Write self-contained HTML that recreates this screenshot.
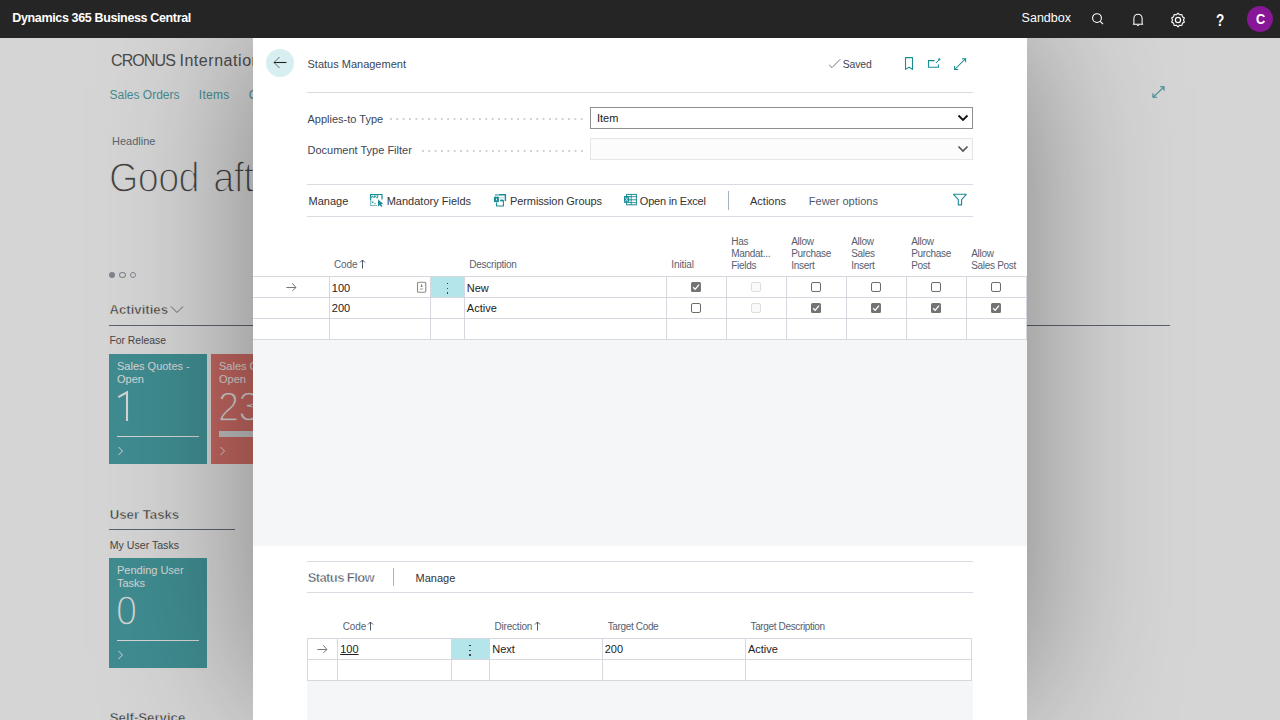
<!DOCTYPE html>
<html><head><meta charset="utf-8"><style>
html,body{margin:0;padding:0;width:1280px;height:720px;overflow:hidden;background:#fff;}
body{position:relative;font-family:"Liberation Sans",sans-serif;}
.t{position:absolute;white-space:nowrap;}
.r{position:absolute;}
svg.r{overflow:visible;}
.dots{background-image:linear-gradient(to right,#cdd0d7 0,#cdd0d7 1.9px,transparent 1.9px);background-size:6.37px 2px;}
</style></head><body>
<div class="r" style="left:0px;top:38px;width:1280px;height:682px;background:#ffffff;"></div>
<div class="t" style="left:111px;top:52.76px;font-size:16px;line-height:16px;color:#5a5a5a;font-weight:normal;letter-spacing:0px;"><span style="letter-spacing:-0.9px">CRONUS</span> <span style="letter-spacing:0.55px">International Ltd.</span></div>
<div class="t" style="left:109.5px;top:88.64px;font-size:12px;line-height:12px;color:#55a7ac;font-weight:normal;letter-spacing:0px;">Sales Orders</div>
<div class="t" style="left:198.8px;top:88.64px;font-size:12px;line-height:12px;color:#55a7ac;font-weight:normal;letter-spacing:0.3px;">Items</div>
<div class="t" style="left:248.8px;top:88.64px;font-size:12px;line-height:12px;color:#55a7ac;font-weight:normal;letter-spacing:0px;">Customers</div>
<div class="t" style="left:112px;top:135.69px;font-size:11px;line-height:11px;color:#6e7886;font-weight:normal;letter-spacing:0px;">Headline</div>
<div class="t" style="left:108.8px;top:157.05px;font-size:42px;line-height:42px;color:#505050;font-weight:normal;letter-spacing:-0.7px;word-spacing:5px;-webkit-text-stroke:1.4px #fff;transform:scaleX(0.9);transform-origin:0 0;">Good afternoon, Annie</div>
<div class="r" style="left:109px;top:272px;width:6px;height:6px;border-radius:50%;background:#96a0aa"></div>
<div class="r" style="left:119px;top:272px;width:5px;height:4px;border-radius:50%;border:1px solid #96a0aa"></div>
<div class="r" style="left:130px;top:272px;width:4px;height:4px;border-radius:50%;border:1px solid #96a0aa"></div>
<div class="t" style="left:109.4px;top:302.63px;font-size:13.2px;line-height:13.2px;color:#474747;font-weight:bold;letter-spacing:0px;-webkit-text-stroke:0.5px #fff;">Activities</div>
<svg class="r" style="left:170px;top:305px" width="14" height="9" viewBox="0 0 14 9"><path d="M1 1.5 L7 7.5 L13 1.5" fill="none" stroke="#777" stroke-width="1"/></svg>
<div class="r" style="left:109px;top:325px;width:1061px;height:1px;background:#6c7682;"></div>
<div class="t" style="left:109.4px;top:335.90px;font-size:10.4px;line-height:10.4px;color:#555;font-weight:normal;letter-spacing:0px;">For Release</div>
<div class="r" style="left:109px;top:354px;width:98px;height:110px;background:#4ca8ad;"></div><div class="t" style="left:117px;top:361.29px;font-size:11px;line-height:11px;color:#fff;font-weight:normal;letter-spacing:0px;">Sales Quotes -</div><div class="t" style="left:117px;top:374.29px;font-size:11px;line-height:11px;color:#fff;font-weight:normal;letter-spacing:0px;">Open</div><svg class="r" style="left:109px;top:392px" width="20" height="40" viewBox="0 0 20 40"><path d="M9.3 5.2 L18 0.3 V29" fill="none" stroke="#fff" stroke-width="2.1" stroke-linejoin="miter"/></svg><div class="r" style="left:117px;top:436px;width:82px;height:1px;background:#fff;"></div><svg class="r" style="left:117px;top:446px" width="8" height="10" viewBox="0 0 8 10"><path d="M1.5 1 L5.5 5 L1.5 9" fill="none" stroke="#fff" stroke-width="1"/></svg>
<div class="r" style="left:211px;top:354px;width:98px;height:110px;background:#e97b73;"></div><div class="t" style="left:219px;top:361.29px;font-size:11px;line-height:11px;color:#fff;font-weight:normal;letter-spacing:0px;">Sales Orders -</div><div class="t" style="left:219px;top:374.29px;font-size:11px;line-height:11px;color:#fff;font-weight:normal;letter-spacing:0px;">Open</div><div class="t" style="left:217.8px;top:385.95px;font-size:42px;line-height:42px;color:#fff;font-weight:normal;letter-spacing:-0.6px;-webkit-text-stroke:1.4px #e97b73;transform:scaleX(0.9);transform-origin:0 0;">23</div><div class="r" style="left:219px;top:431px;width:82px;height:6px;background:#e6e6e6;"></div><svg class="r" style="left:219px;top:446px" width="8" height="10" viewBox="0 0 8 10"><path d="M1.5 1 L5.5 5 L1.5 9" fill="none" stroke="#fff" stroke-width="1"/></svg>
<div class="t" style="left:109.75px;top:507.83px;font-size:13.2px;line-height:13.2px;color:#474747;font-weight:bold;letter-spacing:0px;-webkit-text-stroke:0.5px #fff;">User Tasks</div>
<div class="r" style="left:109px;top:529px;width:126px;height:1px;background:#6c7682;"></div>
<div class="t" style="left:109.75px;top:539.83px;font-size:10.6px;line-height:10.6px;color:#555;font-weight:normal;letter-spacing:0px;">My User Tasks</div>
<div class="r" style="left:109px;top:558px;width:98px;height:110px;background:#4ca8ad;"></div><div class="t" style="left:117px;top:565.29px;font-size:11px;line-height:11px;color:#fff;font-weight:normal;letter-spacing:0px;">Pending User</div><div class="t" style="left:117px;top:578.29px;font-size:11px;line-height:11px;color:#fff;font-weight:normal;letter-spacing:0px;">Tasks</div><div class="t" style="left:115.8px;top:589.95px;font-size:42px;line-height:42px;color:#fff;font-weight:normal;letter-spacing:-0.6px;-webkit-text-stroke:1.4px #4ca8ad;transform:scaleX(0.9);transform-origin:0 0;">0</div><div class="r" style="left:117px;top:640px;width:82px;height:1px;background:#fff;"></div><svg class="r" style="left:117px;top:650px" width="8" height="10" viewBox="0 0 8 10"><path d="M1.5 1 L5.5 5 L1.5 9" fill="none" stroke="#fff" stroke-width="1"/></svg>
<div class="t" style="left:109.75px;top:711.33px;font-size:13.2px;line-height:13.2px;color:#474747;font-weight:bold;letter-spacing:0px;-webkit-text-stroke:0.5px #fff;">Self-Service</div>
<svg class="r" style="left:1151px;top:85px" width="15" height="15" viewBox="0 0 15 15"><path d="M2 12.3 L13 1.8 M9.1 1.8 H13 V5.8 M2 8.3 V12.3 H6" fill="none" stroke="#46a6ac" stroke-width="1.1"/></svg>
<div class="r" style="left:0px;top:38px;width:1280px;height:682px;background:rgba(0,0,0,0.165);"></div>
<div class="r" style="left:253px;top:38px;width:774px;height:662px;box-shadow:0 0 140px rgba(0,0,0,0.4);background:#fff"></div>
<div class="r" style="left:0px;top:0px;width:1280px;height:38px;background:#252525;"></div>
<div class="t" style="left:12.3px;top:12.02px;font-size:12.5px;line-height:12.5px;color:#fff;font-weight:bold;letter-spacing:-0.36px;">Dynamics 365 Business Central</div>
<div class="t" style="left:1021.6px;top:12.42px;font-size:12.5px;line-height:12.5px;color:#fff;font-weight:normal;letter-spacing:0px;">Sandbox</div>
<svg class="r" style="left:1090px;top:11px" width="16" height="16" viewBox="0 0 16 16"><circle cx="7" cy="7.1" r="4.4" fill="none" stroke="#fff" stroke-width="1.1"/><path d="M10.2 10.3 L13 13.1" stroke="#fff" stroke-width="1.2"/></svg>
<svg class="r" style="left:1130px;top:11.5px" width="16" height="16" viewBox="0 0 16 16"><path d="M3.3 12.3 L3.9 11.5 V6.3 A4.1 4.1 0 0 1 12.1 6.3 V11.5 L12.7 12.3 Z" fill="none" stroke="#fff" stroke-width="1.05" stroke-linejoin="round"/><path d="M6.9 12.9 A1.2 1.3 0 0 0 9.1 12.9" fill="none" stroke="#fff" stroke-width="1"/></svg>
<svg class="r" style="left:1170px;top:12px" width="16" height="16" viewBox="0 0 16 16"><path d="M8 1.2 L9.6 2.8 L11.9 2.5 L12.4 4.7 L14.4 6 L13.4 8 L14.4 10 L12.4 11.3 L11.9 13.5 L9.6 13.2 L8 14.8 L6.4 13.2 L4.1 13.5 L3.6 11.3 L1.6 10 L2.6 8 L1.6 6 L3.6 4.7 L4.1 2.5 L6.4 2.8 Z" fill="none" stroke="#fff" stroke-width="1.1" stroke-linejoin="round"/><circle cx="8" cy="8" r="2.6" fill="none" stroke="#fff" stroke-width="1.2"/></svg>
<div class="t" style="left:1215.8px;top:12.33px;font-size:16.5px;line-height:16.5px;color:#fff;font-weight:bold;letter-spacing:0px;transform:scaleX(0.82);transform-origin:0 0;">?</div>
<div class="r" style="left:1247px;top:6px;width:26px;height:26px;border-radius:50%;background:#881798"></div>
<div class="t" style="left:1255.6px;top:12.13px;font-size:14.5px;line-height:14.5px;color:#fff;font-weight:bold;letter-spacing:0px;transform:scaleX(0.88);transform-origin:0 0;">C</div>
<div class="r" style="left:253px;top:38px;width:774px;height:682px;background:#ffffff;"></div>
<div class="r" style="left:266px;top:48.5px;width:28px;height:28px;border-radius:50%;background:#d8eff2"></div>
<svg class="r" style="left:272px;top:55px" width="16" height="15" viewBox="0 0 16 15"><path d="M7.5 2 L2 7.5 L7.5 13" fill="none" stroke="#666" stroke-width="1"/><path d="M14.5 7.5 H2" fill="none" stroke="#222" stroke-width="1.1"/></svg>
<div class="t" style="left:307.5px;top:59.49px;font-size:11px;line-height:11px;color:#3c4656;font-weight:normal;letter-spacing:0px;">Status Management</div>
<svg class="r" style="left:828px;top:58px" width="14" height="12" viewBox="0 0 14 12"><path d="M1.2 6.8 L4 9.6 L12.2 1.3" fill="none" stroke="#5c6676" stroke-width="0.9"/></svg>
<div class="t" style="left:842.8px;top:60.00px;font-size:10.4px;line-height:10.4px;color:#3c4656;font-weight:normal;letter-spacing:-0.15px;">Saved</div>
<svg class="r" style="left:903px;top:56px" width="12" height="15" viewBox="0 0 12 15"><path d="M2.5 1.6 H9.5 V13.4 L6 11.2 L2.5 13.4 Z" fill="none" stroke="#1b8b94" stroke-width="1.1" stroke-linejoin="round"/></svg>
<svg class="r" style="left:926px;top:56px" width="16" height="14" viewBox="0 0 16 14"><path d="M8.6 4.6 H2.5 V11.2 H12.4 V8.6" fill="none" stroke="#1b8b94" stroke-width="1.1"/><path d="M10 7 L13.2 3.6" fill="none" stroke="#1b8b94" stroke-width="1"/><circle cx="13.3" cy="3.4" r="1.1" fill="#1b8b94"/></svg>
<svg class="r" style="left:953px;top:56.8px" width="15" height="14" viewBox="0 0 15 14"><path d="M1.6 12.5 L12.6 1.7 M9 1.7 H12.6 V5.3 M1.6 8.9 V12.5 H5.2" fill="none" stroke="#1b8b94" stroke-width="1.05"/></svg>
<div class="r" style="left:307px;top:92px;width:666px;height:1px;background:#d7dbe2;"></div>
<div class="t" style="left:307.5px;top:114.49px;font-size:11px;line-height:11px;color:#3c4656;font-weight:normal;letter-spacing:0px;">Applies-to Type</div>
<div class="r dots" style="left:390px;top:118.4px;width:195px;height:1.6px"></div>
<div class="r" style="left:590px;top:107px;width:383px;height:22px;background:#fff;border:1px solid #8e8e8e;box-sizing:border-box;"></div>
<div class="t" style="left:597px;top:112.69px;font-size:11px;line-height:11px;color:#212121;font-weight:normal;letter-spacing:0px;">Item</div>
<svg class="r" style="left:957px;top:114px" width="12" height="8" viewBox="0 0 12 8"><path d="M1.5 1.5 L6 6 L10.5 1.5" fill="none" stroke="#111" stroke-width="1.8"/></svg>
<div class="t" style="left:307.5px;top:144.99px;font-size:11px;line-height:11px;color:#3c4656;font-weight:normal;letter-spacing:0px;">Document Type Filter</div>
<div class="r dots" style="left:422.2px;top:150.2px;width:163px;height:1.6px"></div>
<div class="r" style="left:590px;top:138px;width:383px;height:22px;background:#fcfcfc;border:1px solid #e6e6e6;box-sizing:border-box;"></div>
<svg class="r" style="left:957px;top:145px" width="12" height="8" viewBox="0 0 12 8"><path d="M1.5 1.5 L6 6 L10.5 1.5" fill="none" stroke="#555" stroke-width="1.7"/></svg>
<div class="r" style="left:307px;top:184px;width:666px;height:1px;background:#d7dbe2;"></div>
<div class="r" style="left:307px;top:216px;width:666px;height:1px;background:#d7dbe2;"></div>
<div class="t" style="left:308.6px;top:195.69px;font-size:11px;line-height:11px;color:#333;font-weight:normal;letter-spacing:0px;">Manage</div>
<svg class="r" style="left:369px;top:193px" width="16" height="16" viewBox="0 0 16 16"><path d="M1.6 7 V1.5 H13 V6.5" fill="none" stroke="#1b8b94" stroke-width="1.2"/><path d="M2.3 4.8 L3.4 2.8 L4.4 4.8 M5.3 4.8 V2.8 H6.3 L6.6 3.8 L5.3 3.8 M7.5 2.8 H9.2 L7.5 4.8 H9.2" fill="none" stroke="#1b8b94" stroke-width="0.9"/><path d="M1.6 7 V12.5 H8" fill="none" stroke="#7dbdc2" stroke-width="1.1"/><path d="M3 8.5 L4.2 10 M4.2 8.5 L3 10 M5.4 10.6 H6.6" stroke="#1b8b94" stroke-width="0.9"/><path d="M9 6.4 V13.6 L10.7 12 L12.2 14 L13.4 13.3 L12 11.2 L14.2 10.8 Z" fill="#1b8b94"/></svg>
<div class="t" style="left:386.7px;top:195.69px;font-size:11px;line-height:11px;color:#333;font-weight:normal;letter-spacing:0px;">Mandatory Fields</div>
<svg class="r" style="left:493px;top:193px" width="15" height="15" viewBox="0 0 15 15"><path d="M6 1.8 H12.4 V8" fill="none" stroke="#1b8b94" stroke-width="1.4"/><path d="M2 1.8 H6" fill="none" stroke="#6fb6bb" stroke-width="1.2"/><path d="M6 4.8 H12" fill="none" stroke="#a9d6d9" stroke-width="1"/><rect x="1" y="3.8" width="4.9" height="5.3" fill="#1b8b94"/><path d="M2.3 3.8 V2.4 H4.6 V3.8" fill="none" stroke="#7dbdc2" stroke-width="0.9"/><rect x="3.1" y="5.6" width="0.9" height="1.8" fill="#fff"/><path d="M7.2 7.7 H10.4 V13 H3.6 V9.6" fill="none" stroke="#1b8b94" stroke-width="1.1"/><path d="M7.2 7.4 H10.4" stroke="#1b8b94" stroke-width="1.6"/></svg>
<div class="t" style="left:510px;top:195.69px;font-size:11px;line-height:11px;color:#333;font-weight:normal;letter-spacing:-0.1px;">Permission Groups</div>
<svg class="r" style="left:623px;top:193px" width="15" height="13" viewBox="0 0 15 13"><rect x="3.6" y="1.4" width="9.8" height="10.4" fill="none" stroke="#1b8b94" stroke-width="1"/><path d="M3.6 3.7 H13.4 M5.5 6.8 H13.4 M5.5 9.6 H13.4 M8.2 1.4 V11.8" stroke="#1b8b94" stroke-width="0.9"/><rect x="1" y="3" width="5.2" height="6.8" fill="#1b8b94"/><path d="M2.2 4.4 L5 8.5 M5 4.4 L2.2 8.5" stroke="#cfe8ea" stroke-width="0.9"/></svg>
<div class="t" style="left:639.8px;top:195.69px;font-size:11px;line-height:11px;color:#333;font-weight:normal;letter-spacing:-0.2px;">Open in Excel</div>
<div class="r" style="left:728px;top:191px;width:1px;height:19px;background:#aab2be;"></div>
<div class="t" style="left:750px;top:195.69px;font-size:11px;line-height:11px;color:#333;font-weight:normal;letter-spacing:0px;">Actions</div>
<div class="t" style="left:808.8px;top:195.69px;font-size:11px;line-height:11px;color:#4b5a6e;font-weight:normal;letter-spacing:0px;">Fewer options</div>
<svg class="r" style="left:952px;top:193px" width="16" height="14" viewBox="0 0 16 14"><path d="M1.5 1.3 H14.3 L9.6 6.6 V11.9 H6.3 V6.6 Z" fill="none" stroke="#1b8b94" stroke-width="1.1" stroke-linejoin="round"/></svg>
<div class="t" style="left:334px;top:259.94px;font-size:10px;line-height:10px;color:#566170;font-weight:normal;letter-spacing:-0.1px;">Code</div>
<svg class="r" style="left:358.5px;top:259px" width="7" height="10" viewBox="0 0 7 10"><path d="M3.5 9.5 V1 M1 3.5 L3.5 1 L6 3.5" fill="none" stroke="#4d5868" stroke-width="1"/></svg>
<div class="t" style="left:469.3px;top:259.54px;font-size:10px;line-height:10px;color:#566170;font-weight:normal;letter-spacing:-0.25px;">Description</div>
<div class="t" style="left:671.3px;top:259.54px;font-size:10px;line-height:10px;color:#566170;font-weight:normal;letter-spacing:-0.1px;">Initial</div>
<div class="t" style="left:731.3px;top:237.14px;font-size:10px;line-height:10px;color:#566170;font-weight:normal;letter-spacing:-0.3px;">Has</div>
<div class="t" style="left:731.3px;top:249.14px;font-size:10px;line-height:10px;color:#566170;font-weight:normal;letter-spacing:-0.3px;">Mandat...</div>
<div class="t" style="left:731.3px;top:261.14px;font-size:10px;line-height:10px;color:#566170;font-weight:normal;letter-spacing:-0.3px;">Fields</div>
<div class="t" style="left:791.2px;top:237.14px;font-size:10px;line-height:10px;color:#566170;font-weight:normal;letter-spacing:-0.3px;">Allow</div>
<div class="t" style="left:791.2px;top:249.14px;font-size:10px;line-height:10px;color:#566170;font-weight:normal;letter-spacing:-0.3px;">Purchase</div>
<div class="t" style="left:791.2px;top:261.14px;font-size:10px;line-height:10px;color:#566170;font-weight:normal;letter-spacing:-0.3px;">Insert</div>
<div class="t" style="left:851.2px;top:237.14px;font-size:10px;line-height:10px;color:#566170;font-weight:normal;letter-spacing:-0.3px;">Allow</div>
<div class="t" style="left:851.2px;top:249.14px;font-size:10px;line-height:10px;color:#566170;font-weight:normal;letter-spacing:-0.3px;">Sales</div>
<div class="t" style="left:851.2px;top:261.14px;font-size:10px;line-height:10px;color:#566170;font-weight:normal;letter-spacing:-0.3px;">Insert</div>
<div class="t" style="left:911.2px;top:237.14px;font-size:10px;line-height:10px;color:#566170;font-weight:normal;letter-spacing:-0.3px;">Allow</div>
<div class="t" style="left:911.2px;top:249.14px;font-size:10px;line-height:10px;color:#566170;font-weight:normal;letter-spacing:-0.3px;">Purchase</div>
<div class="t" style="left:911.2px;top:261.14px;font-size:10px;line-height:10px;color:#566170;font-weight:normal;letter-spacing:-0.3px;">Post</div>
<div class="t" style="left:971.2px;top:249.14px;font-size:10px;line-height:10px;color:#566170;font-weight:normal;letter-spacing:-0.3px;">Allow</div>
<div class="t" style="left:971.2px;top:261.14px;font-size:10px;line-height:10px;color:#566170;font-weight:normal;letter-spacing:-0.3px;">Sales Post</div>
<div class="r" style="left:253px;top:276px;width:774px;height:1px;background:#d5d8de;"></div>
<div class="r" style="left:253px;top:297px;width:774px;height:1px;background:#d5d8de;"></div>
<div class="r" style="left:253px;top:318px;width:774px;height:1px;background:#d5d8de;"></div>
<div class="r" style="left:253px;top:339px;width:774px;height:1px;background:#d5d8de;"></div>
<div class="r" style="left:329px;top:276px;width:1px;height:64px;background:#d5d8de;"></div>
<div class="r" style="left:430px;top:276px;width:1px;height:64px;background:#d5d8de;"></div>
<div class="r" style="left:464px;top:276px;width:1px;height:64px;background:#d5d8de;"></div>
<div class="r" style="left:666px;top:276px;width:1px;height:64px;background:#d5d8de;"></div>
<div class="r" style="left:726px;top:276px;width:1px;height:64px;background:#d5d8de;"></div>
<div class="r" style="left:786px;top:276px;width:1px;height:64px;background:#d5d8de;"></div>
<div class="r" style="left:846px;top:276px;width:1px;height:64px;background:#d5d8de;"></div>
<div class="r" style="left:906px;top:276px;width:1px;height:64px;background:#d5d8de;"></div>
<div class="r" style="left:966px;top:276px;width:1px;height:64px;background:#d5d8de;"></div>
<div class="r" style="left:1026px;top:276px;width:1px;height:64px;background:#d5d8de;"></div>
<div class="r" style="left:431px;top:277px;width:33px;height:20px;background:#b3e5ea;"></div>
<div class="r" style="left:446.6px;top:282.5px;width:1.6px;height:1.6px;background:#333"></div>
<div class="r" style="left:446.6px;top:287.5px;width:1.6px;height:1.6px;background:#444"></div>
<div class="r" style="left:446.6px;top:292.2px;width:1.6px;height:1.8px;background:#444"></div>
<svg class="r" style="left:285px;top:282px" width="13" height="11" viewBox="0 0 13 11"><path d="M1.4 5.5 H11 M7.3 1.3 L11 5.5 L7.3 8.8" fill="none" stroke="#777" stroke-width="1"/></svg>
<div class="t" style="left:331.8px;top:283.29px;font-size:11px;line-height:11px;color:#212121;font-weight:normal;letter-spacing:0px;">100</div>
<div class="t" style="left:331.8px;top:303.09px;font-size:11px;line-height:11px;color:#212121;font-weight:normal;letter-spacing:0px;">200</div>
<svg class="r" style="left:416px;top:281px" width="11" height="12" viewBox="0 0 11 12"><rect x="1.5" y="1.2" width="8.3" height="10" rx="1.2" fill="none" stroke="#8a8a8a" stroke-width="1.1"/><path d="M5.6 2.6 L4.4 5.9 H6.8 Z" fill="#8a8a8a"/><rect x="4" y="7.2" width="3.2" height="1.6" fill="#c4c4c4"/></svg>
<div class="t" style="left:466.8px;top:282.99px;font-size:11px;line-height:11px;color:#212121;font-weight:normal;letter-spacing:0px;">New</div>
<div class="t" style="left:466.8px;top:303.09px;font-size:11px;line-height:11px;color:#212121;font-weight:normal;letter-spacing:0px;">Active</div>
<svg class="r" style="left:691px;top:282px" width="10" height="10" viewBox="0 0 10 10"><rect x="0" y="0" width="10" height="10" rx="1.5" fill="#737373"/><path d="M2.2 5.2 L4.2 7.3 L8 2.6" fill="none" stroke="#fff" stroke-width="1.3"/></svg>
<svg class="r" style="left:691px;top:302.6px" width="10" height="10" viewBox="0 0 10 10"><rect x="0.5" y="0.5" width="9" height="9" rx="1.5" fill="#fff" stroke="#6c6c6c" stroke-width="1"/></svg>
<svg class="r" style="left:751px;top:282px" width="10" height="10" viewBox="0 0 10 10"><rect x="0.5" y="0.5" width="9" height="9" rx="1.5" fill="#fafafa" stroke="#dedede" stroke-width="1"/></svg>
<svg class="r" style="left:751px;top:302.6px" width="10" height="10" viewBox="0 0 10 10"><rect x="0.5" y="0.5" width="9" height="9" rx="1.5" fill="#fafafa" stroke="#dedede" stroke-width="1"/></svg>
<svg class="r" style="left:811px;top:282px" width="10" height="10" viewBox="0 0 10 10"><rect x="0.5" y="0.5" width="9" height="9" rx="1.5" fill="#fff" stroke="#6c6c6c" stroke-width="1"/></svg>
<svg class="r" style="left:811px;top:302.6px" width="10" height="10" viewBox="0 0 10 10"><rect x="0" y="0" width="10" height="10" rx="1.5" fill="#737373"/><path d="M2.2 5.2 L4.2 7.3 L8 2.6" fill="none" stroke="#fff" stroke-width="1.3"/></svg>
<svg class="r" style="left:871px;top:282px" width="10" height="10" viewBox="0 0 10 10"><rect x="0.5" y="0.5" width="9" height="9" rx="1.5" fill="#fff" stroke="#6c6c6c" stroke-width="1"/></svg>
<svg class="r" style="left:871px;top:302.6px" width="10" height="10" viewBox="0 0 10 10"><rect x="0" y="0" width="10" height="10" rx="1.5" fill="#737373"/><path d="M2.2 5.2 L4.2 7.3 L8 2.6" fill="none" stroke="#fff" stroke-width="1.3"/></svg>
<svg class="r" style="left:931px;top:282px" width="10" height="10" viewBox="0 0 10 10"><rect x="0.5" y="0.5" width="9" height="9" rx="1.5" fill="#fff" stroke="#6c6c6c" stroke-width="1"/></svg>
<svg class="r" style="left:931px;top:302.6px" width="10" height="10" viewBox="0 0 10 10"><rect x="0" y="0" width="10" height="10" rx="1.5" fill="#737373"/><path d="M2.2 5.2 L4.2 7.3 L8 2.6" fill="none" stroke="#fff" stroke-width="1.3"/></svg>
<svg class="r" style="left:991px;top:282px" width="10" height="10" viewBox="0 0 10 10"><rect x="0.5" y="0.5" width="9" height="9" rx="1.5" fill="#fff" stroke="#6c6c6c" stroke-width="1"/></svg>
<svg class="r" style="left:991px;top:302.6px" width="10" height="10" viewBox="0 0 10 10"><rect x="0" y="0" width="10" height="10" rx="1.5" fill="#737373"/><path d="M2.2 5.2 L4.2 7.3 L8 2.6" fill="none" stroke="#fff" stroke-width="1.3"/></svg>
<div class="r" style="left:253px;top:340px;width:774px;height:205.5px;background:#f5f6f8;"></div>
<div class="r" style="left:307px;top:561px;width:666px;height:1px;background:#d7dbe2;"></div>
<div class="r" style="left:307px;top:592px;width:666px;height:1px;background:#d7dbe2;"></div>
<div class="t" style="left:307.7px;top:571.20px;font-size:13px;line-height:13px;color:#4d5766;font-weight:bold;letter-spacing:-0.6px;-webkit-text-stroke:0.45px #fff;">Status Flow</div>
<div class="r" style="left:393px;top:568px;width:1px;height:18px;background:#aab2be;"></div>
<div class="t" style="left:415.6px;top:572.99px;font-size:11px;line-height:11px;color:#333;font-weight:normal;letter-spacing:0px;">Manage</div>
<div class="t" style="left:342.7px;top:621.53px;font-size:10px;line-height:10px;color:#566170;font-weight:normal;letter-spacing:-0.1px;">Code</div>
<svg class="r" style="left:367px;top:621px" width="7" height="10" viewBox="0 0 7 10"><path d="M3.5 9.5 V1 M1 3.5 L3.5 1 L6 3.5" fill="none" stroke="#4d5868" stroke-width="1"/></svg>
<div class="t" style="left:494.5px;top:621.53px;font-size:10px;line-height:10px;color:#566170;font-weight:normal;letter-spacing:-0.2px;">Direction</div>
<svg class="r" style="left:534px;top:621px" width="7" height="10" viewBox="0 0 7 10"><path d="M3.5 9.5 V1 M1 3.5 L3.5 1 L6 3.5" fill="none" stroke="#4d5868" stroke-width="1"/></svg>
<div class="t" style="left:607.7px;top:621.53px;font-size:10px;line-height:10px;color:#566170;font-weight:normal;letter-spacing:-0.35px;">Target Code</div>
<div class="t" style="left:750.5px;top:621.53px;font-size:10px;line-height:10px;color:#566170;font-weight:normal;letter-spacing:-0.35px;">Target Description</div>
<div class="r" style="left:307px;top:638px;width:665px;height:1px;background:#d5d8de;"></div>
<div class="r" style="left:307px;top:659px;width:665px;height:1px;background:#d5d8de;"></div>
<div class="r" style="left:307px;top:680px;width:665px;height:1px;background:#d5d8de;"></div>
<div class="r" style="left:307px;top:638px;width:1px;height:43px;background:#d5d8de;"></div>
<div class="r" style="left:337px;top:638px;width:1px;height:43px;background:#d5d8de;"></div>
<div class="r" style="left:451px;top:638px;width:1px;height:43px;background:#d5d8de;"></div>
<div class="r" style="left:489px;top:638px;width:1px;height:43px;background:#d5d8de;"></div>
<div class="r" style="left:602px;top:638px;width:1px;height:43px;background:#d5d8de;"></div>
<div class="r" style="left:745px;top:638px;width:1px;height:43px;background:#d5d8de;"></div>
<div class="r" style="left:971px;top:638px;width:1px;height:43px;background:#d5d8de;"></div>
<div class="r" style="left:452px;top:639px;width:37px;height:20px;background:#b3e5ea;"></div>
<div class="r" style="left:469.4px;top:644.5px;width:1.6px;height:1.6px;background:#333"></div>
<div class="r" style="left:469.4px;top:649.5px;width:1.6px;height:1.6px;background:#444"></div>
<div class="r" style="left:469.4px;top:654.2px;width:1.6px;height:1.8px;background:#444"></div>
<svg class="r" style="left:316px;top:644px" width="13" height="11" viewBox="0 0 13 11"><path d="M1.4 5.5 H11 M7.3 1.3 L11 5.5 L7.3 8.8" fill="none" stroke="#777" stroke-width="1"/></svg>
<div class="t" style="left:340.2px;top:644.09px;font-size:11px;line-height:11px;color:#212121;font-weight:normal;letter-spacing:0px;text-decoration:underline;">100</div>
<div class="t" style="left:492.2px;top:644.29px;font-size:11px;line-height:11px;color:#212121;font-weight:normal;letter-spacing:0px;">Next</div>
<div class="t" style="left:604.7px;top:644.29px;font-size:11px;line-height:11px;color:#212121;font-weight:normal;letter-spacing:0px;">200</div>
<div class="t" style="left:747.9px;top:644.09px;font-size:11px;line-height:11px;color:#212121;font-weight:normal;letter-spacing:0px;">Active</div>
<div class="r" style="left:307px;top:681px;width:666px;height:39px;background:#f5f6f8;"></div>
</body></html>
